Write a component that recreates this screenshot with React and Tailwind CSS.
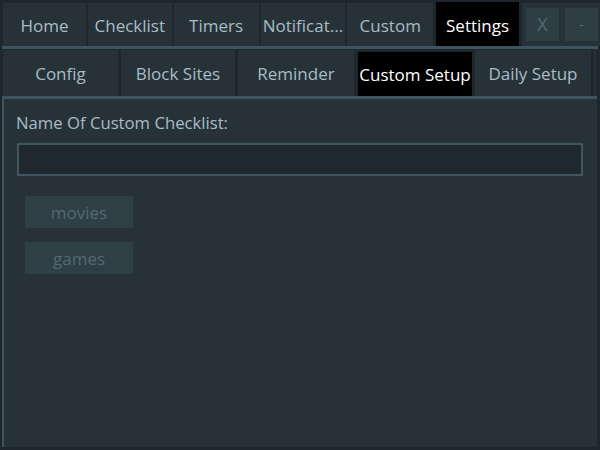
import React from 'react'

const mainTabs = [
  { label: 'Home', w: 'w-[83px]' },
  { label: 'Checklist', w: 'w-[84px]' },
  { label: 'Timers', w: 'w-[85px]' },
  { label: 'Notificat...', w: 'w-[85px]' },
  { label: 'Custom', w: 'w-[86px] mr-[1px]' },
  { label: 'Settings', w: 'w-[83px]', active: true },
]

const subTabs = [
  { label: 'Config', w: 'w-[115px]' },
  { label: 'Block Sites', w: 'w-[114px]' },
  { label: 'Reminder', w: 'w-[116px] mr-[1px]' },
  { label: 'Custom Setup', w: 'w-[114px]', active: true },
  { label: 'Daily Setup', w: 'w-[116px]' },
]

export default function App() {
  return (
    <div
      className="w-[600px] h-[450px] bg-[#1e272c] flex flex-col overflow-hidden"
      style={{ fontFamily: '"Open Sans", "Noto Sans", sans-serif' }}
    >
      {/* Main tabs */}
      <div className="flex h-[46px] pt-[3px] pl-[3px] gap-[2px]">
        {mainTabs.map((t) => (
          <div
            key={t.label}
            className={`${t.w} flex items-center justify-center text-[17px] pt-[3px] ${
              t.active ? 'bg-black text-white -mt-[1px]' : 'bg-[#263238] text-[#a9bcc6]'
            }`}
          >
            {t.label}
          </div>
        ))}
        <div className="flex-1 bg-[#263238] flex items-center gap-[6px] pl-[4px] pr-[2px] ml-[1px]">
          <button className="w-[33px] h-[33px] bg-[#2e3e44] text-[#4f6b74] text-[18px] flex items-center justify-center">
            X
          </button>
          <button className="w-[33px] h-[33px] bg-[#2e3e44] text-[#4f6b74] text-[14px] flex items-center justify-center">
            -
          </button>
        </div>
      </div>
      <div className="h-[3px] mx-[2px] bg-[#3d5560]" />

      {/* Sub tabs */}
      <div className="flex h-[47px] pl-[3px] pr-[4px] gap-[3px] pt-[1px]">
        {subTabs.map((t) => (
          <div
            key={t.label}
            className={`${t.w} flex items-center justify-center text-[17px] pt-[2px] ${
              t.active ? 'bg-black text-white mt-[2px]' : 'bg-[#263238] text-[#a9bcc6]'
            }`}
          >
            {t.label}
          </div>
        ))}
        <div className="flex-1 bg-[#263238]" />
      </div>
      <div className="h-[3px] ml-[2px] mr-[3px] bg-[#3d5560]" />

      {/* Content */}
      <div className="flex-1 ml-[2px] mr-[3px] mb-[3px] border-l-2 border-[#3d5560] bg-[#263238] px-[12px] pt-[13px]">
        <div className="text-[16.7px] text-[#a9bcc6] leading-[22px]">Name Of Custom Checklist:</div>
        <input
          className="mt-[9px] ml-[1px] w-[566px] h-[33px] bg-[#1f282e] border-2 border-[#3f555f] outline-none text-[#a9bcc6] px-2"
          type="text"
        />
        <div className="flex flex-col gap-[14px] mt-[20px] ml-[9px]">
          {['movies', 'games'].map((b) => (
            <button
              key={b}
              className="w-[108px] h-[32px] bg-[#2e3f45] text-[#4f6b74] text-[17px] flex items-center justify-center pt-[1px]"
            >
              {b}
            </button>
          ))}
        </div>
      </div>
    </div>
  )
}
